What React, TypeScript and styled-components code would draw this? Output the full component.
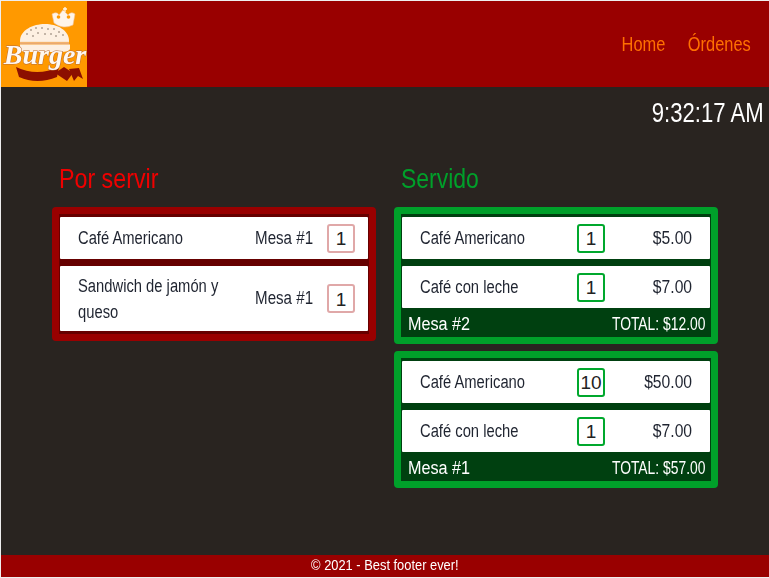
import React from "react";
import styled, { createGlobalStyle } from "styled-components";

const Global = createGlobalStyle`
  html, body { margin: 0; padding: 0; height: 100%; }
  body { background: #eeeeee; font-family: "Liberation Sans", sans-serif; }
  #root { height: 100%; box-sizing: border-box; padding: 1px 0 1px 1px; }
`;

const Narrow = styled.span<{ $s?: number; $o?: string }>`
  display: inline-block; white-space: nowrap;
  transform: scaleX(${(p) => p.$s ?? 0.82}); transform-origin: ${(p) => p.$o ?? "left"} center;
`;
const WrapName = styled(Narrow)`
  display: block; white-space: normal; width: 190px;
`;
const Page = styled.div`
  height: 576px; display: flex; flex-direction: column; background: #292420;
`;
const Header = styled.header`
  height: 86px; flex: none; display: flex; align-items: center; justify-content: space-between; background: #990000;
`;
const LogoBox = styled.div`
  width: 86px; height: 86px; background: #ff9900; overflow: hidden;
  svg { display: block; filter: blur(0.5px); }
`;
const Nav = styled.nav`
  display: flex; gap: 9px; padding-right: 18px;
`;
const NavLink = styled.a`
  color: #ff7000; font-size: 20px; line-height: 24px;
`;
const Clock = styled.div`
  height: 53px; flex: none; padding: 9px 5px 0 0; box-sizing: border-box; text-align: right;
  color: #fff; font-size: 28px; line-height: 34px;
`;
const Columns = styled.main`
  flex: 1; display: grid; grid-template-columns: 324px 324px; column-gap: 18px; padding: 19px 0 0 51px; align-content: start; align-items: start;
`;
const Column = styled.section`
  display: flex; flex-direction: column; gap: 7px;
`;
const Heading = styled.h2<{ $c: string }>`
  margin: 0 0 2px 7px; height: 39px; color: ${(p) => p.$c}; font-size: 28px; line-height: 39px; font-weight: 400;
`;
const Panel = styled.div<{ $outer: string; $inner: string }>`
  border: 7px solid ${(p) => p.$outer}; border-radius: 4px; background: ${(p) => p.$inner}; padding: 3px 1px 3px;
  display: flex; flex-direction: column; gap: 7px;
`;
const GreenPanel = styled(Panel)`
  padding-bottom: 0;
`;
const Row = styled.div<{ $tall?: boolean }>`
  height: ${(p) => (p.$tall ? 65 : 42)}px; display: flex; align-items: center; background: #fff; padding: 0 13px 0 18px; color: #1f2430;
  font-size: 18px; border-radius: 1px;
`;
const OrderRow = styled(Row)`
  padding-right: 18px;
`;
const Name = styled.div`
  flex: 1; min-width: 0; line-height: 26px;
`;
const Table = styled.div`
  margin-right: 14px;
`;
const Qty = styled.div<{ $c: string }>`
  width: 28px; height: 29px; box-sizing: border-box; flex: none; display: flex; align-items: center; justify-content: center; padding-top: 2px;
  border: 2px solid ${(p) => p.$c}; border-radius: 3px; font-size: 19px; color: #222;
`;
const Price = styled.div`
  width: 87px; text-align: right;
`;
const Summary = styled.div`
  margin-top: -7px; height: 29px; box-sizing: border-box; display: flex; align-items: center; justify-content: space-between; padding: 3px 5px 0 6px; background: #004010; color: #fff; font-size: 18px;
`;
const Footer = styled.footer`
  height: 22px; flex: none; background: #990000; color: #fff; text-align: center; font-size: 15.5px; line-height: 20px;
`;

const Logo = () => (
  <svg width="86" height="86" viewBox="0 0 86 86">
    <path d="M53 22 L51 13 Q56 10 58 14 L62 9 L67 14 Q70 10 74 13 L72 24 Q62 29 53 22Z" fill="#fff4e8" stroke="#f0c090" strokeWidth="0.6" />
    <path d="M64 6v5M62 8h4" stroke="#fff4e8" strokeWidth="1.3" />
    <circle cx="57.5" cy="16" r="1.8" fill="#ff9900" /><circle cx="67.5" cy="16" r="1.8" fill="#ff9900" />
    <path d="M19 40 C19 29 32 23 44 23 C56 23 68 29 68 40 Z" fill="#fdf0e2" />
    {[[30,29],[35,27],[41,27],[47,28],[53,28],[58,31],[37,32],[44,33],[50,33],[26,33],[55,35],[32,35],[62,34]].map(([x, y], i) => (
      <circle key={i} cx={x} cy={y} r="0.8" fill="#7a6a5c" />
    ))}
    <rect x="19" y="40" width="49" height="1.5" fill="#fbe6d0" />
    <rect x="19" y="41.5" width="49" height="2" fill="#e9a871" />
    <path d="M19 43.5 H69 V48 Q68 51 60 51 H28 Q19 51 19 48 Z" fill="#fdf0e2" />
    <path d="M15 66 Q36 76 58 66 L56 76 Q36 84 18 76Z" fill="#8c0f00" />
    <path d="M54 72 L63 66 L72 72 L66 80 Z" fill="#8c0f00" />
    <path d="M68 68 L78 67 L82 78 L77 75 L73 80 Z" fill="#8c0f00" />
    <text x="44" y="63" textAnchor="middle" fontFamily="'Liberation Serif', serif" fontStyle="italic" fontWeight="700" fontSize="28" fill="#fff8f0" stroke="#b96b35" strokeWidth="1" paintOrder="stroke">Burger</text>
  </svg>
);

const pink = "#e0a8a8";
const green = "#00a82d";

const Served = ({ items, mesa, total }: { items: [string, string, string][]; mesa: string; total: string }) => (
  <GreenPanel $outer="#00a02a" $inner="#004010">
    {items.map(([n, q, p]) => (
      <OrderRow key={n}>
        <Name><Narrow>{n}</Narrow></Name>
        <Qty $c={green}>{q}</Qty>
        <Price><Narrow $s={0.87} $o="right">{p}</Narrow></Price>
      </OrderRow>
    ))}
    <Summary><Narrow $s={0.9}>{mesa}</Narrow><Narrow $s={0.77} $o="right">{total}</Narrow></Summary>
  </GreenPanel>
);

export default function App() {
  return (
    <>
      <Global />
      <Page>
        <Header>
          <LogoBox><Logo /></LogoBox>
          <Nav>
            <NavLink><Narrow $o="right">Home</Narrow></NavLink>
            <NavLink><Narrow $o="right">Órdenes</Narrow></NavLink>
          </Nav>
        </Header>
        <Clock><Narrow $s={0.79} $o="right">9:32:17 AM</Narrow></Clock>
        <Columns>
          <Column>
            <Heading $c="#f00000"><Narrow $s={0.83}>Por servir</Narrow></Heading>
            <Panel $outer="#990000" $inner="#660000">
              <Row><Name><Narrow>Café Americano</Narrow></Name><Table><Narrow $s={0.84} $o="right">Mesa #1</Narrow></Table><Qty $c={pink}>1</Qty></Row>
              <Row $tall><Name><WrapName>Sandwich de jamón y queso</WrapName></Name><Table><Narrow $s={0.84} $o="right">Mesa #1</Narrow></Table><Qty $c={pink}>1</Qty></Row>
            </Panel>
          </Column>
          <Column>
            <Heading $c="#00a02a"><Narrow $s={0.82}>Servido</Narrow></Heading>
            <Served items={[["Café Americano", "1", "$5.00"], ["Café con leche", "1", "$7.00"]]} mesa="Mesa #2" total="TOTAL: $12.00" />
            <Served items={[["Café Americano", "10", "$50.00"], ["Café con leche", "1", "$7.00"]]} mesa="Mesa #1" total="TOTAL: $57.00" />
          </Column>
        </Columns>
        <Footer><Narrow $s={0.83} $o="center">© 2021 - Best footer ever!</Narrow></Footer>
      </Page>
    </>
  );
}
